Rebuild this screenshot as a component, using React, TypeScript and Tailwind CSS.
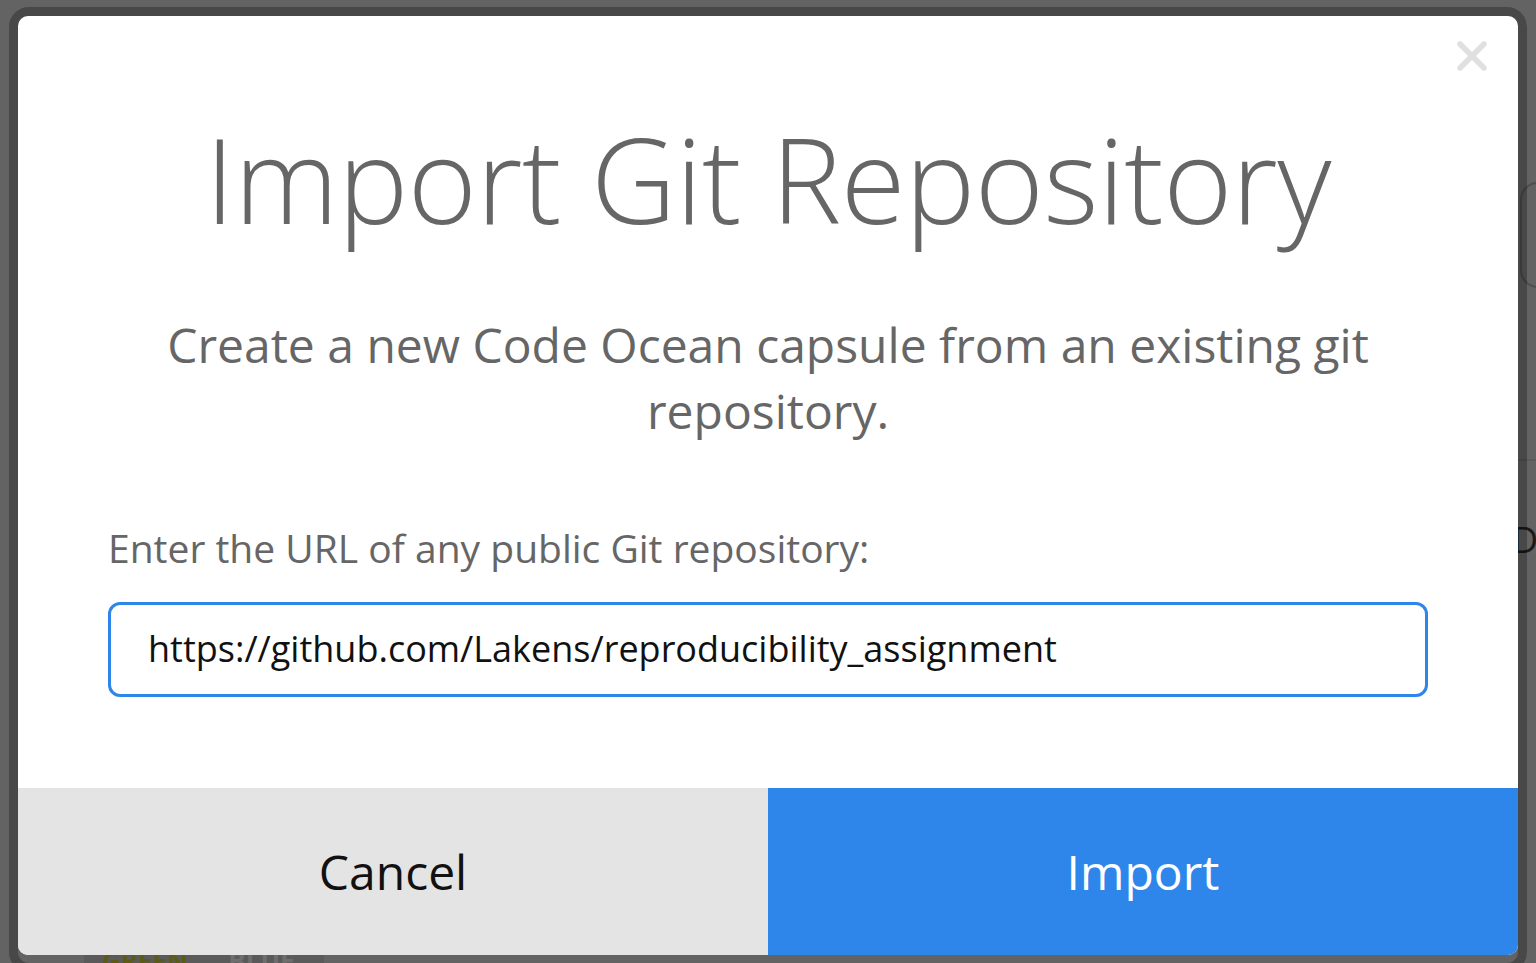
import { X } from 'lucide-react';

const font = { fontFamily: '"Open Sans", "Liberation Sans", sans-serif' };

const Backdrop = () => (
  <div className="absolute inset-0">
    <div className="absolute left-[1520px] top-[182px] w-[60px] h-[106px] rounded-[18px] border-2 border-[#4f4f4f]" />
    <div className="absolute left-[1500px] top-[459px] w-[60px] h-[2px] bg-[#595959]" />
    <div className="absolute left-[1512px] top-[522px] text-[36px] leading-none text-[#1a1a1a]">D</div>
    <div className="absolute left-[84px] top-[930px] w-[240px] h-[40px] bg-[#5a5a5a] flex items-end gap-[40px] pl-[18px]">
      <span className="text-[26px] font-bold text-[#5c5a16] leading-none translate-y-[4px]">GREEN</span>
      <span className="text-[26px] font-bold text-[#6e6e6e] leading-none translate-y-[4px]">BLUE</span>
    </div>
  </div>
);

export default function App() {
  return (
    <div className="relative w-[1536px] h-[963px] bg-[#636363] overflow-hidden" style={font}>
      <Backdrop />
      <div className="relative pl-[9px] pt-[7px]">
        <div className="w-[1518px] h-[965px] rounded-[20px] border-[9px] border-[rgba(0,0,0,0.27)]">
          <div className="relative w-[1500px] h-[939px] bg-white rounded-[10px] overflow-hidden flex flex-col">
            <button className="absolute right-[22px] top-[16px] text-[#e0e0e0]">
              <X size={48} strokeWidth={2.8} />
            </button>

            <h1 className="mt-[103px] text-center text-[118px] leading-[120px] font-light text-[#666666] tracking-[-0.5px]">
              Import Git Repository
            </h1>

            <p className="mt-[73px] mx-auto w-[1240px] text-center text-[48px] leading-[66px] text-[#666666]">
              Create a new Code Ocean capsule from an existing git repository.
            </p>

            <div className="mt-[76px] px-[90px]">
              <label className="block text-[39px] leading-[56px] text-[#666666]">
                Enter the URL of any public Git repository:
              </label>
              <div className="mt-[26px] h-[95px] rounded-[12px] border-[3px] border-[#2e86eb] flex items-center pl-[37px]">
                <span className="text-[36px] text-[#111111] -translate-y-[1px]">
                  https://github.com/Lakens/reproducibility_assignment
                </span>
              </div>
            </div>

            <div className="mt-auto flex h-[167px]">
              <button className="flex-1 bg-[#e4e4e4] text-[#111111] text-[48px] flex items-center justify-center">
                Cancel
              </button>
              <button className="flex-1 bg-[#2e86eb] text-white text-[48px] flex items-center justify-center">
                Import
              </button>
            </div>
          </div>
        </div>
      </div>
    </div>
  );
}
